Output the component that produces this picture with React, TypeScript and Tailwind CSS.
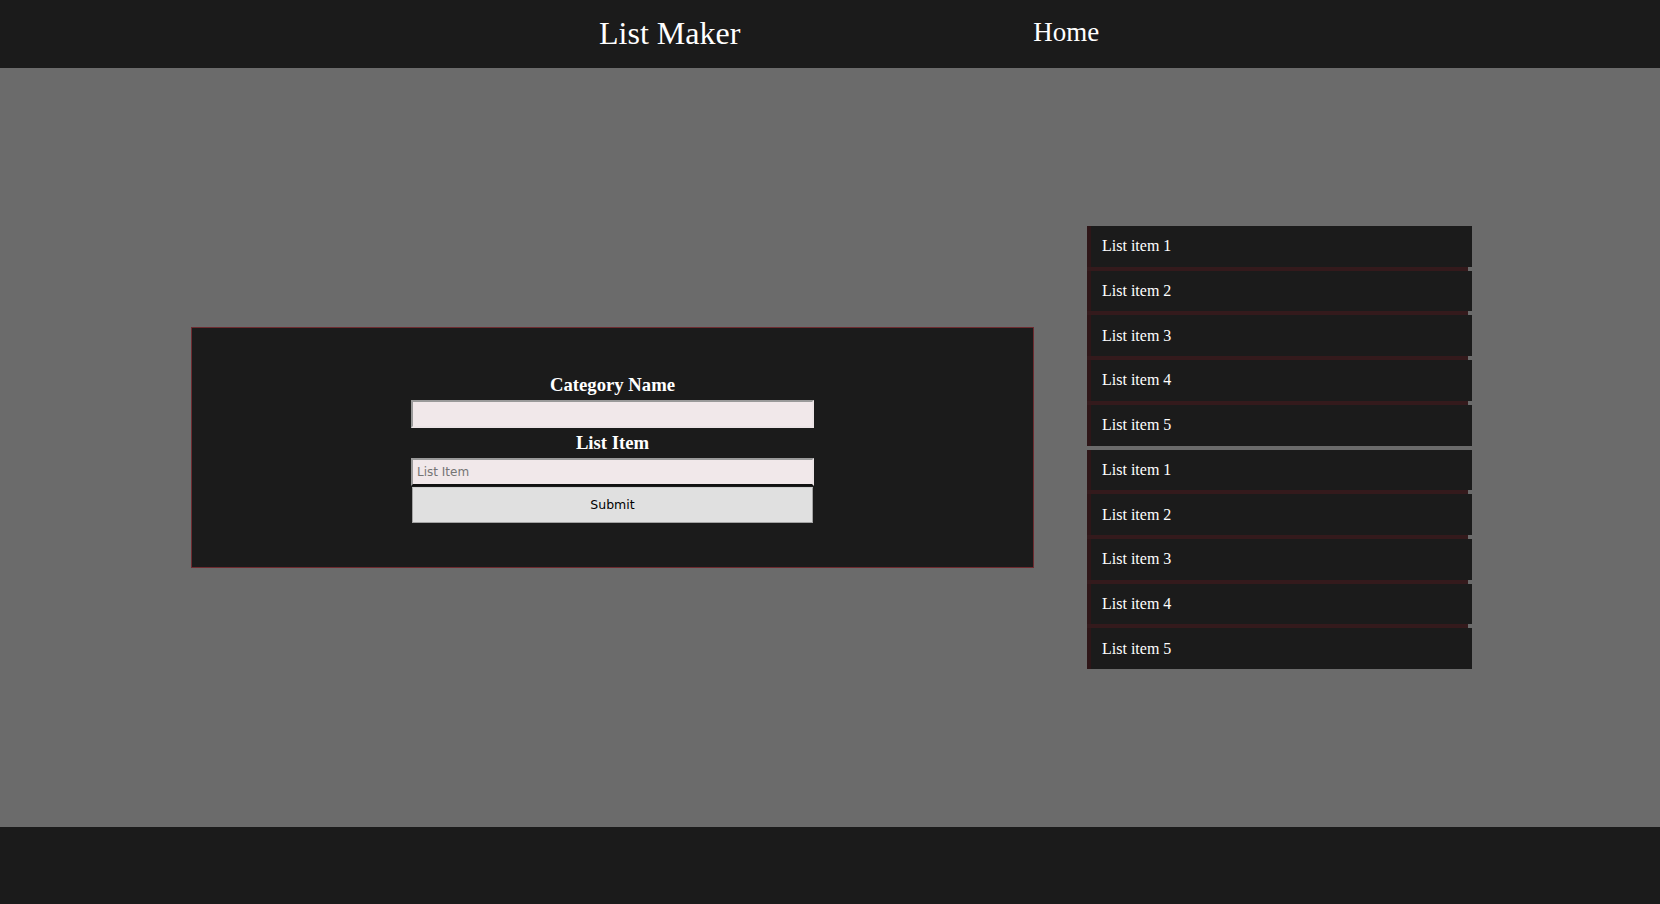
const lists = [
  ['List item 1', 'List item 2', 'List item 3', 'List item 4', 'List item 5'],
  ['List item 1', 'List item 2', 'List item 3', 'List item 4', 'List item 5'],
];

function ListBlock({ items }: { items: string[] }) {
  return (
    <ul className="flex flex-col">
      {items.map((item, i) => (
        <li key={i} className="flex flex-col">
          <div className="flex h-[40.7px] items-center border-l-4 border-[#2e1618] bg-[#1b1b1b] pl-[11px] text-[16px] text-white">
            {item}
          </div>
          {i < items.length - 1 && (
            <div className="flex h-[4px]">
              <div className="flex-1 bg-[#341a1c]" />
              <div className="w-[4px] bg-[#6b6b6b]" />
            </div>
          )}
        </li>
      ))}
    </ul>
  );
}

export default function App() {
  return (
    <div className="flex min-h-[904px] flex-col bg-[#6b6b6b] font-['Liberation_Serif',serif]">
      {/* Navbar */}
      <header className="flex h-[68px] items-center bg-[#1b1b1b] pb-[3px] pl-[599px] text-white">
        <h1 className="text-[32px] leading-none">List Maker</h1>
        <a className="ml-[293px] text-[27px] leading-none">Home</a>
      </header>

      {/* Main */}
      <main className="flex h-[759px] items-center gap-[53px] pl-[191px]">
        <div className="flex w-[843px] flex-col items-center border border-[#6e2b30] bg-[#1b1b1b] pt-[42px] pb-[44px]">
          <label className="flex h-[30px] items-center text-[18.72px] font-bold text-white">Category Name</label>
          <input
            className="h-[28px] w-[403px] border-2 border-[#9a9a9a] border-r-[#ece4e6] border-b-[#ece4e6] bg-[#f1e8ea] px-1 text-[12px] outline-none"
          />
          <label className="flex h-[30px] items-center text-[18.72px] font-bold text-white">List Item</label>
          <input
            placeholder="List Item"
            className="h-[28px] w-[403px] border-2 border-[#9a9a9a] border-r-[#ece4e6] border-b-[#111] bg-[#f1e8ea] px-[4px] font-['DejaVu_Sans',sans-serif] text-[12px] outline-none placeholder:text-[#757575]"
          />
          <button className="mt-px h-[36px] w-[401px] border border-[#a3a3a3] border-t-[#d0d0d0] bg-[#e0e0e0] font-['DejaVu_Sans',sans-serif] text-[12.5px] text-black">
            Submit
          </button>
        </div>

        <div className="flex w-[385px] flex-col gap-[4px]">
          {lists.map((items, i) => (
            <ListBlock key={i} items={items} />
          ))}
        </div>
      </main>

      {/* Footer */}
      <footer className="h-[77px] bg-[#1b1b1b]" />
    </div>
  );
}
